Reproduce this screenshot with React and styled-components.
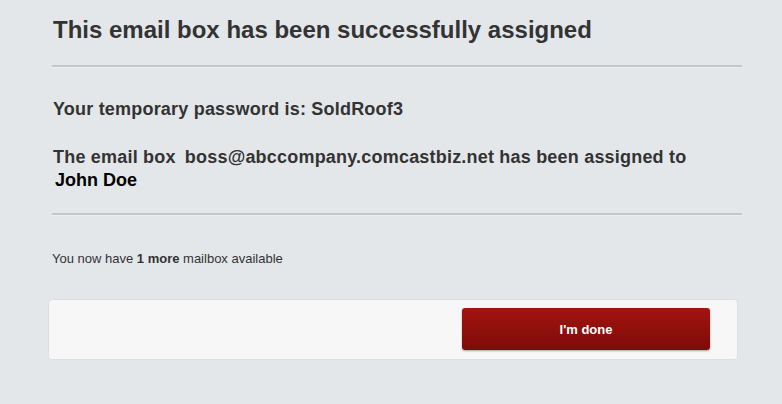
import React from "react";
import styled, { createGlobalStyle } from "styled-components";

const GlobalStyle = createGlobalStyle`
  html, body {
    margin: 0;
    padding: 0;
    background: #e4e7ea;
    font-family: "Liberation Sans", Arial, sans-serif;
  }
`;

export default function App() {
  return (
    <>
      <GlobalStyle />
      <Page>
        <Section>
          <Title>This email box has been successfully assigned</Title>
        </Section>
        <Divider />
        <Section>
          <Message>Your temporary password is: SoldRoof3</Message>
          <Message $gap>
            The email box <Email>boss@abccompany.comcastbiz.net</Email> has
            been assigned to
            <br />
            <Name>John Doe</Name>
          </Message>
        </Section>
        <Divider />
        <Note>
          You now have <strong>1 more</strong> mailbox available
        </Note>
        <Footer>
          <DoneButton>I'm done</DoneButton>
        </Footer>
      </Page>
    </>
  );
}

const Page = styled.div`
  width: 690px;
  padding: 16px 0 0 52px;
`;

const Section = styled.div`
  padding-left: 1px;
`;

const Title = styled.h1`
  margin: 0;
  font-size: 24px;
  line-height: 28px;
  font-weight: bold;
  color: #333;
`;

const Divider = styled.hr`
  margin: 21px 0 0;
  border: 0;
  height: 2px;
  background: #c4c6c8;
  border-bottom: 1px solid #eceef0;
`;

const Message = styled.p`
  margin: ${(p) => (p.$gap ? "25px 0 0" : "30px 0 0")};
  font-size: 18px;
  line-height: 23px;
  font-weight: bold;
  letter-spacing: 0.2px;
  color: #333;
`;

const Email = styled.span`
  margin-left: 4px;
`;

const Name = styled.span`
  display: inline-block;
  margin-left: 2px;
  letter-spacing: 0;
  color: #000;
`;

const Note = styled.p`
  margin: 35px 0 0;
  font-size: 13px;
  line-height: 16px;
  color: #333;

  strong {
    font-weight: bold;
  }
`;

const Footer = styled.div`
  margin: 32px 4px 0 -4px;
  display: flex;
  justify-content: flex-end;
  padding: 8px 27px 9px;
  background: #f7f7f7;
  border: 1px solid #dcdee0;
  border-radius: 4px;
`;

const DoneButton = styled.button`
  width: 248px;
  height: 42px;
  border: 0;
  border-radius: 3px;
  background: linear-gradient(#a31410, #7d0b09);
  box-shadow: 0 1px 2px rgba(0, 0, 0, 0.35);
  color: #fff;
  font-family: "Liberation Sans", Arial, sans-serif;
  font-size: 13px;
  font-weight: bold;
  cursor: pointer;
`;
